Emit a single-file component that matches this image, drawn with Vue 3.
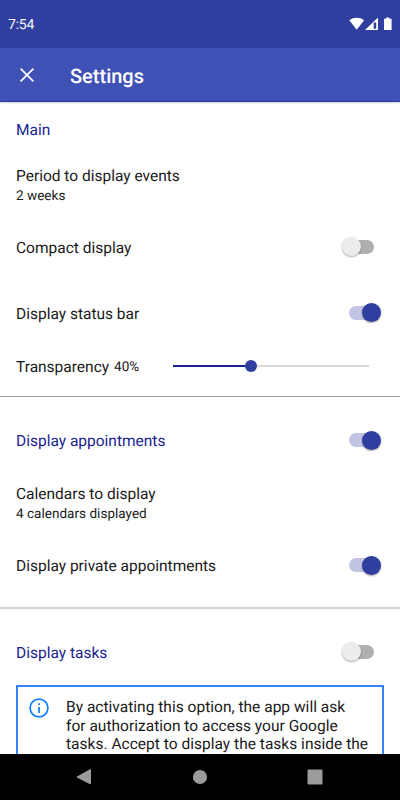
<script setup>
import { reactive } from 'vue'

const settings = reactive({
  compact: false,
  statusBar: true,
  transparency: 40,
  appointments: true,
  privateAppointments: true,
  tasks: false,
})
</script>

<template>
  <div class="screen">
    <div class="status">
      <span class="clock">7:54</span>
      <svg class="indicators" width="44" height="14" viewBox="0 0 44 14" fill="#fff">
        <path d="M0.3 3.2C4.5-.1 10.9-.1 15.1 3.2L7.7 12.7Z" />
        <path fill-rule="evenodd" d="M29 .6V13H16ZM24.7 5.6H27.2V11.8H24.7Z" />
        <path d="M37.2.5H40.3V1.8H42.6V13H35V1.8H37.2Z" />
      </svg>
    </div>
    <header class="appbar">
      <svg class="close" width="16" height="16" viewBox="0 0 16 16" fill="none" stroke="#fff" stroke-width="1.7">
        <path d="M1.6 1.6L14.4 14.4M14.4 1.6L1.6 14.4" />
      </svg>
      <h1>Settings</h1>
    </header>

    <main>
      <section class="general">
        <div class="row heading main-heading"><span>Main</span></div>
        <div class="entry">
          <div class="label">Period to display events</div>
          <div class="value">2 weeks</div>
        </div>
        <div class="row">
          <span class="label">Compact display</span>
          <button class="switch" :class="{ on: settings.compact }" @click="settings.compact = !settings.compact"></button>
        </div>
        <div class="row">
          <span class="label">Display status bar</span>
          <button class="switch" :class="{ on: settings.statusBar }" @click="settings.statusBar = !settings.statusBar"></button>
        </div>
        <div class="row slider-row">
          <span class="label">Transparency</span>
          <span class="percent">{{ settings.transparency }}%</span>
          <div class="slider">
            <div class="fill" :style="{ width: settings.transparency + '%' }"></div>
            <div class="knob"></div>
            <div class="rest"></div>
          </div>
        </div>
      </section>

      <section class="appointments">
        <div class="row heading">
          <span>Display appointments</span>
          <button class="switch" :class="{ on: settings.appointments }" @click="settings.appointments = !settings.appointments"></button>
        </div>
        <div class="entry calendars">
          <div class="label">Calendars to display</div>
          <div class="value">4 calendars displayed</div>
        </div>
        <div class="row">
          <span class="label">Display private appointments</span>
          <button class="switch" :class="{ on: settings.privateAppointments }" @click="settings.privateAppointments = !settings.privateAppointments"></button>
        </div>
      </section>

      <section class="tasks">
        <div class="row heading">
          <span>Display tasks</span>
          <button class="switch" :class="{ on: settings.tasks }" @click="settings.tasks = !settings.tasks"></button>
        </div>
        <div class="notice">
          <svg width="20" height="20" viewBox="0 0 20 20" fill="#1080ff">
            <circle cx="10" cy="10" r="8.9" fill="none" stroke="#1080ff" stroke-width="1.7" />
            <path d="M9.1 5.2H10.9V7H9.1ZM9.1 9H10.9V15H9.1Z" />
          </svg>
          <p>By activating this option, the app will ask<br />for authorization to access your Google<br />tasks. Accept to display the tasks inside the</p>
        </div>
      </section>
    </main>

    <nav class="navbar">
      <svg width="16" height="18" viewBox="0 0 16 18" fill="#9b9b9b"><path d="M1 8.5L14 1.2Q15 .7 15 1.8V15.6Q15 16.7 14 16.2L1 9.4Q.3 9 1 8.5Z" /></svg>
      <svg width="16" height="18" viewBox="0 0 16 18" fill="#9b9b9b"><circle cx="8" cy="9" r="7.1" /></svg>
      <svg width="16" height="18" viewBox="0 0 16 18" fill="#9b9b9b"><rect x=".5" y="1.5" width="15" height="15" rx="1" /></svg>
    </nav>
  </div>
</template>

<style>
body {
  margin: 0;
  background: #fff;
}
</style>

<style scoped>
.screen {
  width: 400px;
  height: 800px;
  display: flex;
  flex-direction: column;
  overflow: hidden;
  background: #fff;
  color: #1a1a1a;
  font-family: Roboto, sans-serif;
  font-size: 15.5px;
  letter-spacing: 0;
  text-rendering: geometricPrecision;
}
.status {
  height: 48px;
  flex: none;
  display: flex;
  align-items: center;
  justify-content: space-between;
  box-sizing: border-box;
  padding: 0 7px 0 8px;
  background: #303f9f;
  color: #f4f5fb;
}
.clock {
  font-size: 14px;
  letter-spacing: -0.2px;
  padding-top: 1px;
}
.appbar {
  height: 54px;
  flex: none;
  display: flex;
  align-items: center;
  box-sizing: border-box;
  padding: 1px 0 0 19px;
  background: #3f51b5;
  border-bottom: 1px solid #2637a8;
  box-shadow: 0 1px 2px rgba(0, 0, 0, 0.18);
  color: #fff;
}
h1 {
  margin: 0 0 0 35px;
  padding-top: 1px;
  font-size: 20px;
  font-weight: 500;
  letter-spacing: 0;
}
main {
  flex: 1;
  min-height: 0;
  overflow: hidden;
}
section {
  box-sizing: border-box;
}
.general {
  height: 295px;
  border-bottom: 1px solid #9e9e9e;
}
.appointments {
  height: 212px;
  padding-top: 10px;
  border-bottom: 2px solid #d3d3d3;
}
.tasks {
  padding-top: 10px;
}
.row {
  height: 66px;
  display: flex;
  align-items: center;
  box-sizing: border-box;
  padding: 0 16px;
}
.row > span {
  padding-top: 1px;
}
.heading {
  color: #1a238f;
}
.main-heading {
  height: 54px;
}
.entry {
  height: 58px;
  box-sizing: border-box;
  padding: 10px 16px 0;
}
.calendars {
  height: 59px;
  padding-top: 11px;
}
.label {
  line-height: 20px;
}
.value {
  font-size: 13.5px;
  line-height: 20px;
  letter-spacing: 0.03px;
}
.switch {
  position: relative;
  width: 25px;
  height: 14px;
  margin: 0 10px 0 auto;
  padding: 0;
  border: 0;
  border-radius: 7px;
  background: #b0b0b0;
}
.general .switch,
.tasks .switch {
  margin-bottom: 1px;
}
.switch::after {
  content: "";
  position: absolute;
  top: -2.5px;
  left: -7px;
  width: 19px;
  height: 19px;
  border-radius: 50%;
  background: #ececec;
  box-shadow: 0 1px 2px rgba(0, 0, 0, 0.35);
}
.switch.on {
  background: #c1c5e3;
}
.switch.on::after {
  left: 13px;
  background: #303f9f;
}
.slider-row {
  height: 40px;
}
.percent {
  margin-left: 5px;
  font-size: 13.5px;
}
.slider {
  width: 196px;
  margin: -1px 15px 0 auto;
  display: flex;
  align-items: center;
}
.fill {
  height: 2px;
  background: #1a238f;
}
.knob {
  flex: none;
  width: 12px;
  height: 12px;
  margin: 0 -6px;
  border-radius: 50%;
  background: #303f9f;
  z-index: 1;
}
.rest {
  flex: 1;
  height: 2px;
  background: #dadada;
}
.notice {
  height: 120px;
  display: flex;
  box-sizing: border-box;
  margin: 0 16px;
  padding: 11px 0 0 11px;
  border: 2px solid #3584f5;
}
.notice svg {
  flex: none;
}
.notice p {
  margin: 0 0 0 17px;
  line-height: 18.5px;
  letter-spacing: 0.02px;
  white-space: nowrap;
}
.navbar {
  height: 46px;
  flex: none;
  display: flex;
  align-items: center;
  justify-content: space-between;
  box-sizing: border-box;
  padding: 0 77px 0 76px;
  background: #000;
}
</style>
